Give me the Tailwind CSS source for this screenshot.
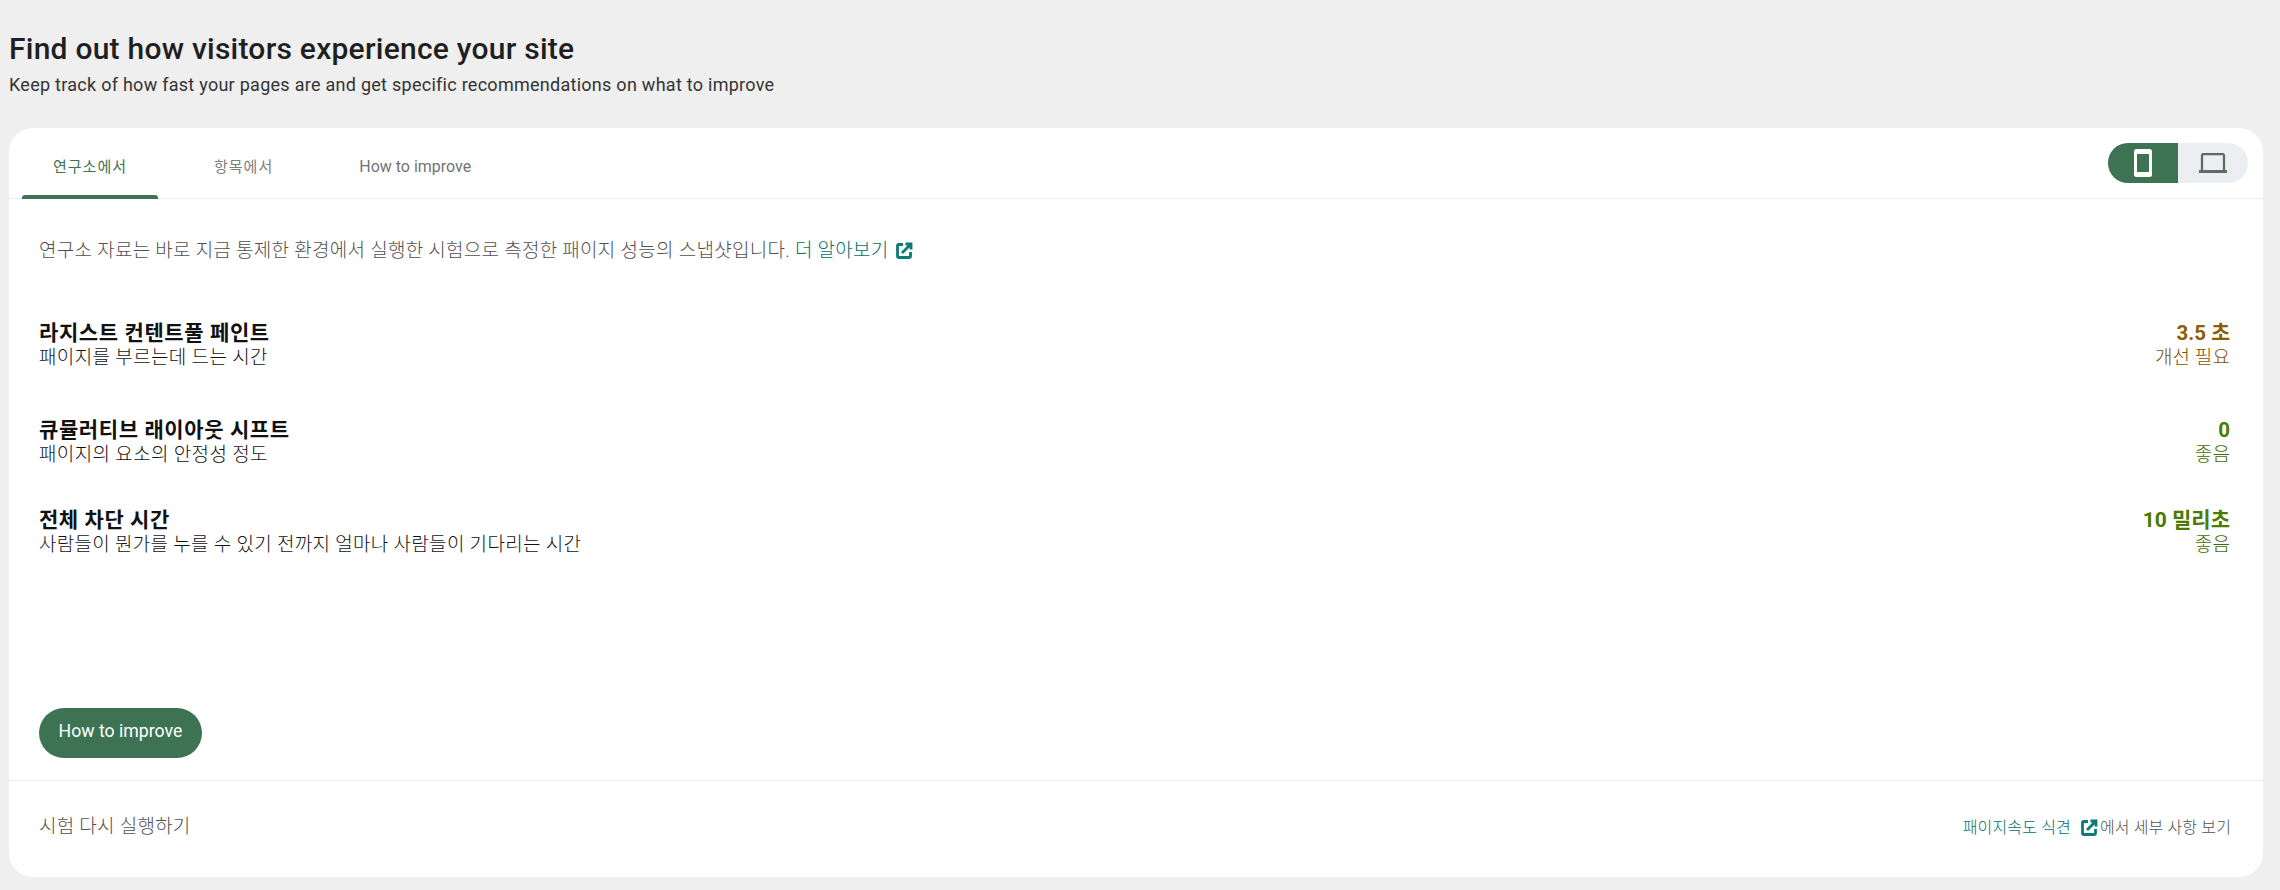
<!DOCTYPE html>
<html lang="ko"><head><meta charset="utf-8">
<script src="https://cdn.jsdelivr.net/npm/@tailwindcss/browser@4"></script>
</head>
<body class="m-0 h-[890px] w-[2280px] overflow-hidden bg-[#efefef] font-['Roboto','Noto_Sans_CJK_KR',sans-serif]">
<div class="pl-[9px] pr-[17px] pt-[30px]">
  <h1 class="text-[30px] leading-[38px] font-medium tracking-[0.24px] text-[#1f1f1f]">Find out how visitors experience your site</h1>
  <p class="mt-[4px] text-[18px] leading-[26px] tracking-[0.27px] text-[#333]">Keep track of how fast your pages are and get specific recommendations on what to improve</p>
  <div class="mt-[30px] h-[749px] rounded-[24px] bg-white flex flex-col">
    <div class="relative h-[71px] shrink-0 border-b border-[#eceff1] flex items-stretch gap-[24px] pl-[13px]">
      <div class="relative px-[31px] pt-[8px] flex items-center justify-center text-[15px] tracking-[1px] text-[#3d7353]">연구소에서<span class="absolute bottom-[-1px] left-0 right-0 h-[4px] rounded-t-[3px] bg-[#3d7353]"></span></div>
      <div class="ml-[1px] px-[31px] pt-[8px] flex items-center justify-center text-[15px] tracking-[1px] text-[#7d7d7d]">항목에서</div>
      <div class="px-[31px] pt-[8px] flex items-center justify-center text-[16px] text-[#737373]">How to improve</div>
      <div class="absolute right-[15px] top-[15px] flex h-[40px] w-[140px] overflow-hidden rounded-full bg-[#eceff1]">
        <div class="flex w-[70px] items-center justify-center bg-[#3d7353]">
          <svg width="18" height="28" viewBox="0 0 18 28"><rect width="18" height="28" rx="2.500" fill="#fff"/><rect x="3" y="5" width="12" height="18" fill="#3d7353"/></svg>
        </div>
        <div class="flex w-[70px] items-center justify-center">
          <svg width="28" height="20" viewBox="0 0 28 20"><path d="M3 18V2.500A1.500 1.500 0 0 1 4.500 1h19A1.500 1.500 0 0 1 25 2.500V18" fill="none" stroke="#616b66" stroke-width="2.300"/><rect y="17" width="28" height="3" fill="#616b66"/></svg>
        </div>
      </div>
    </div>
    <div class="flex-1 relative flex flex-col pl-[30px] pr-[33px]">
      <p class="mt-[39px] flex items-center text-[19px] font-light leading-[26px] tracking-[0.27px] text-[#505050]">연구소 자료는 바로 지금 통제한 환경에서 실행한 시험으로 측정한 패이지 성능의 스냅샷입니다.&nbsp;<span class="text-[#006f6b]">더 알아보기</span>
        <svg class="ml-[6px]" width="18" height="18" viewBox="0 0 18 18"><path d="M8 2.500H3.500a1 1 0 0 0-1 1v11a1 1 0 0 0 1 1h11a1 1 0 0 0 1-1V10" fill="none" stroke="#0b7b77" stroke-width="2.800"/><path d="M7 11 15 3M10.500 2H16v5.500" fill="none" stroke="#0b7b77" stroke-width="2.800"/></svg>
      </p>
      <div class="mt-[56px] flex justify-between"><div><div class="text-[21px] leading-[26px] font-bold tracking-[0.6px] text-[#111]">라지스트 컨텐트풀 페인트</div><div class="text-[19px] font-light leading-[24px] tracking-[0.35px] text-[#111]">패이지를 부르는데 드는 시간</div></div><div class="text-right"><div class="text-[20.5px] leading-[26px] font-bold text-[#8f5a00]">3.5 초</div><div class="text-[19px] font-light leading-[24px] tracking-[0.1px] text-[#7f4f00]">개선 필요</div></div></div>
      <div class="mt-[47px] flex justify-between"><div><div class="text-[21px] leading-[26px] font-bold tracking-[0.6px] text-[#111]">큐뮬러티브 래이아웃 시프트</div><div class="text-[19px] font-light leading-[24px] tracking-[0.35px] text-[#111]">패이지의 요소의 안정성 정도</div></div><div class="text-right"><div class="text-[20.5px] leading-[26px] font-bold text-[#4c7a00]">0</div><div class="text-[19px] font-light leading-[24px] tracking-[0.1px] text-[#426b00]">좋음</div></div></div>
      <div class="mt-[40px] flex justify-between"><div><div class="text-[21px] leading-[26px] font-bold tracking-[0.55px] text-[#111]">전체 차단 시간</div><div class="text-[19px] font-light leading-[24px] tracking-[0.3px] text-[#111]">사람들이 뭔가를 누를 수 있기 전까지 얼마나 사람들이 기다리는 시간</div></div><div class="text-right"><div class="text-[21px] leading-[26px] font-bold text-[#4c7a00]">10 밀리초</div><div class="text-[19px] font-light leading-[24px] tracking-[0.1px] text-[#426b00]">좋음</div></div></div>
      <button class="absolute left-[30px] bottom-[22px] h-[50px] w-[163px] rounded-full bg-[#3d7353] pb-[3px] text-[17.7px] text-white">How to improve</button>
    </div>
    <div class="h-[97px] shrink-0 border-t border-[#eceff1] flex items-center justify-between pb-[3px] pl-[30px] pr-[32px]">
      <span class="text-[19px] font-light tracking-[0.25px] text-[#505050]">시험 다시 실행하기</span>
      <span class="flex items-center text-[16px] font-light tracking-[0.15px] text-[#505050]"><span class="text-[#006f6b]">패이지속도 식견</span>
      <svg class="ml-[9px] mr-[2px]" width="18" height="18" viewBox="0 0 18 18"><path d="M8 2.500H3.500a1 1 0 0 0-1 1v11a1 1 0 0 0 1 1h11a1 1 0 0 0 1-1V10" fill="none" stroke="#0b7b77" stroke-width="2.800"/><path d="M7 11 15 3M10.500 2H16v5.500" fill="none" stroke="#0b7b77" stroke-width="2.800"/></svg>에서 세부 사항 보기</span>
    </div>
  </div>
</div>
</body></html>
